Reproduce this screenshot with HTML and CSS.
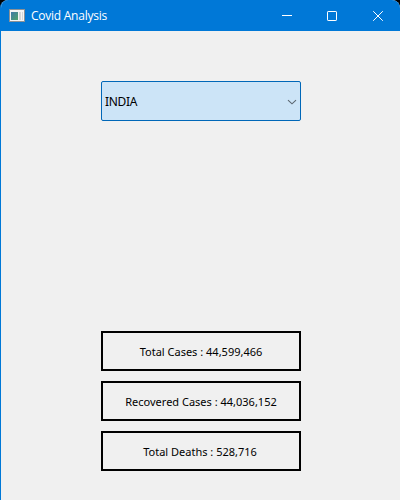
FILE: index.html
```html
<!DOCTYPE html>
<html lang="en">
<head>
<meta charset="utf-8">
<title>Covid Analysis</title>
<link rel="stylesheet" href="styles.css">
</head>
<body>
<div class="window">
  <header class="titlebar">
    <svg class="app-icon" width="16" height="16" viewBox="0 0 16 16">
      <defs><linearGradient id="pane" x1="0" y1="0" x2="1" y2="1"><stop offset="0" stop-color="#3f79a8"/><stop offset="1" stop-color="#4fa36b"/></linearGradient></defs>
      <path fill="#8b9196" d="M0 1h16v13H0z"/>
      <path fill="#f4f4f4" d="M1 2h14v11H1z"/>
      <path fill="url(#pane)" d="M2 4h7v8H2z"/>
      <path fill="#d3d6d8" d="M10 4h2v8h-2zM13 4h1v8h-1z"/>
    </svg>
    <h1 class="title">Covid Analysis</h1>
    <div class="controls">
      <span class="control"><svg width="12" height="12" viewBox="0 0 12 12"><path d="M1 5.5h10"/></svg></span>
      <span class="control"><svg width="12" height="12" viewBox="0 0 12 12"><rect x="1.5" y="1.5" width="9" height="9" rx=".6"/></svg></span>
      <span class="control"><svg width="12" height="12" viewBox="0 0 12 12"><path d="M1.2 1.2l9.6 9.6M10.8 1.2l-9.6 9.6"/></svg></span>
    </div>
  </header>
  <main class="content">
    <div class="select">
      <span class="country">INDIA</span>
      <svg width="10" height="6" viewBox="0 0 10 6"><path d="M1 1.2l4 3.6 4-3.6"/></svg>
    </div>
    <div class="stats">
      <div class="stat">Total Cases : <span class="number">44,599,466</span></div>
      <div class="stat">Recovered Cases : <span class="number">44,036,152</span></div>
      <div class="stat deaths">Total Deaths : <span class="number">528,716</span></div>
    </div>
  </main>
</div>
</body>
</html>
```
FILE: styles.css
```css
* { box-sizing: border-box; }
body { margin: 0; background: #000; font-family: "Noto Sans", sans-serif; color: #000; }
.window {
  width: 400px;
  height: 500px;
  background: #f0f0f0;
  border-left: 1px solid #0078d7;
  border-radius: 8px 8px 0 0;
  overflow: hidden;
}
.titlebar {
  height: 31px;
  display: flex;
  align-items: center;
  background: #0078d7;
  color: #fff;
  padding-left: 8px;
}
.title { margin: 1px 0 0 6px; font: 400 12px/16px "Open Sans", sans-serif; letter-spacing: -0.25px; }
.controls { display: flex; margin-left: auto; }
.control { width: 45.5px; height: 30px; display: flex; align-items: center; justify-content: center; padding-left: 1px; }
.control svg { fill: none; stroke: #fff; stroke-width: 1; }
.content { padding: 50px 99px 0 100px; }
.select {
  height: 40px;
  display: flex;
  align-items: center;
  justify-content: space-between;
  padding: 0 3px;
  background: #cce4f7;
  border: 1px solid #0067b8;
  border-radius: 2px;
}
.country { font-size: 12px; letter-spacing: -0.3px; }
.select svg { fill: none; stroke: #5b666f; stroke-width: 1.1; margin-top: 1px; }
.stats { display: grid; gap: 10px; margin-top: 210px; }
.stat {
  height: 40px;
  border: 2px solid #000;
  display: flex;
  align-items: center;
  justify-content: center;
  white-space: pre;
  font-size: 11px;
}
.deaths { padding-right: 2px; }
```
